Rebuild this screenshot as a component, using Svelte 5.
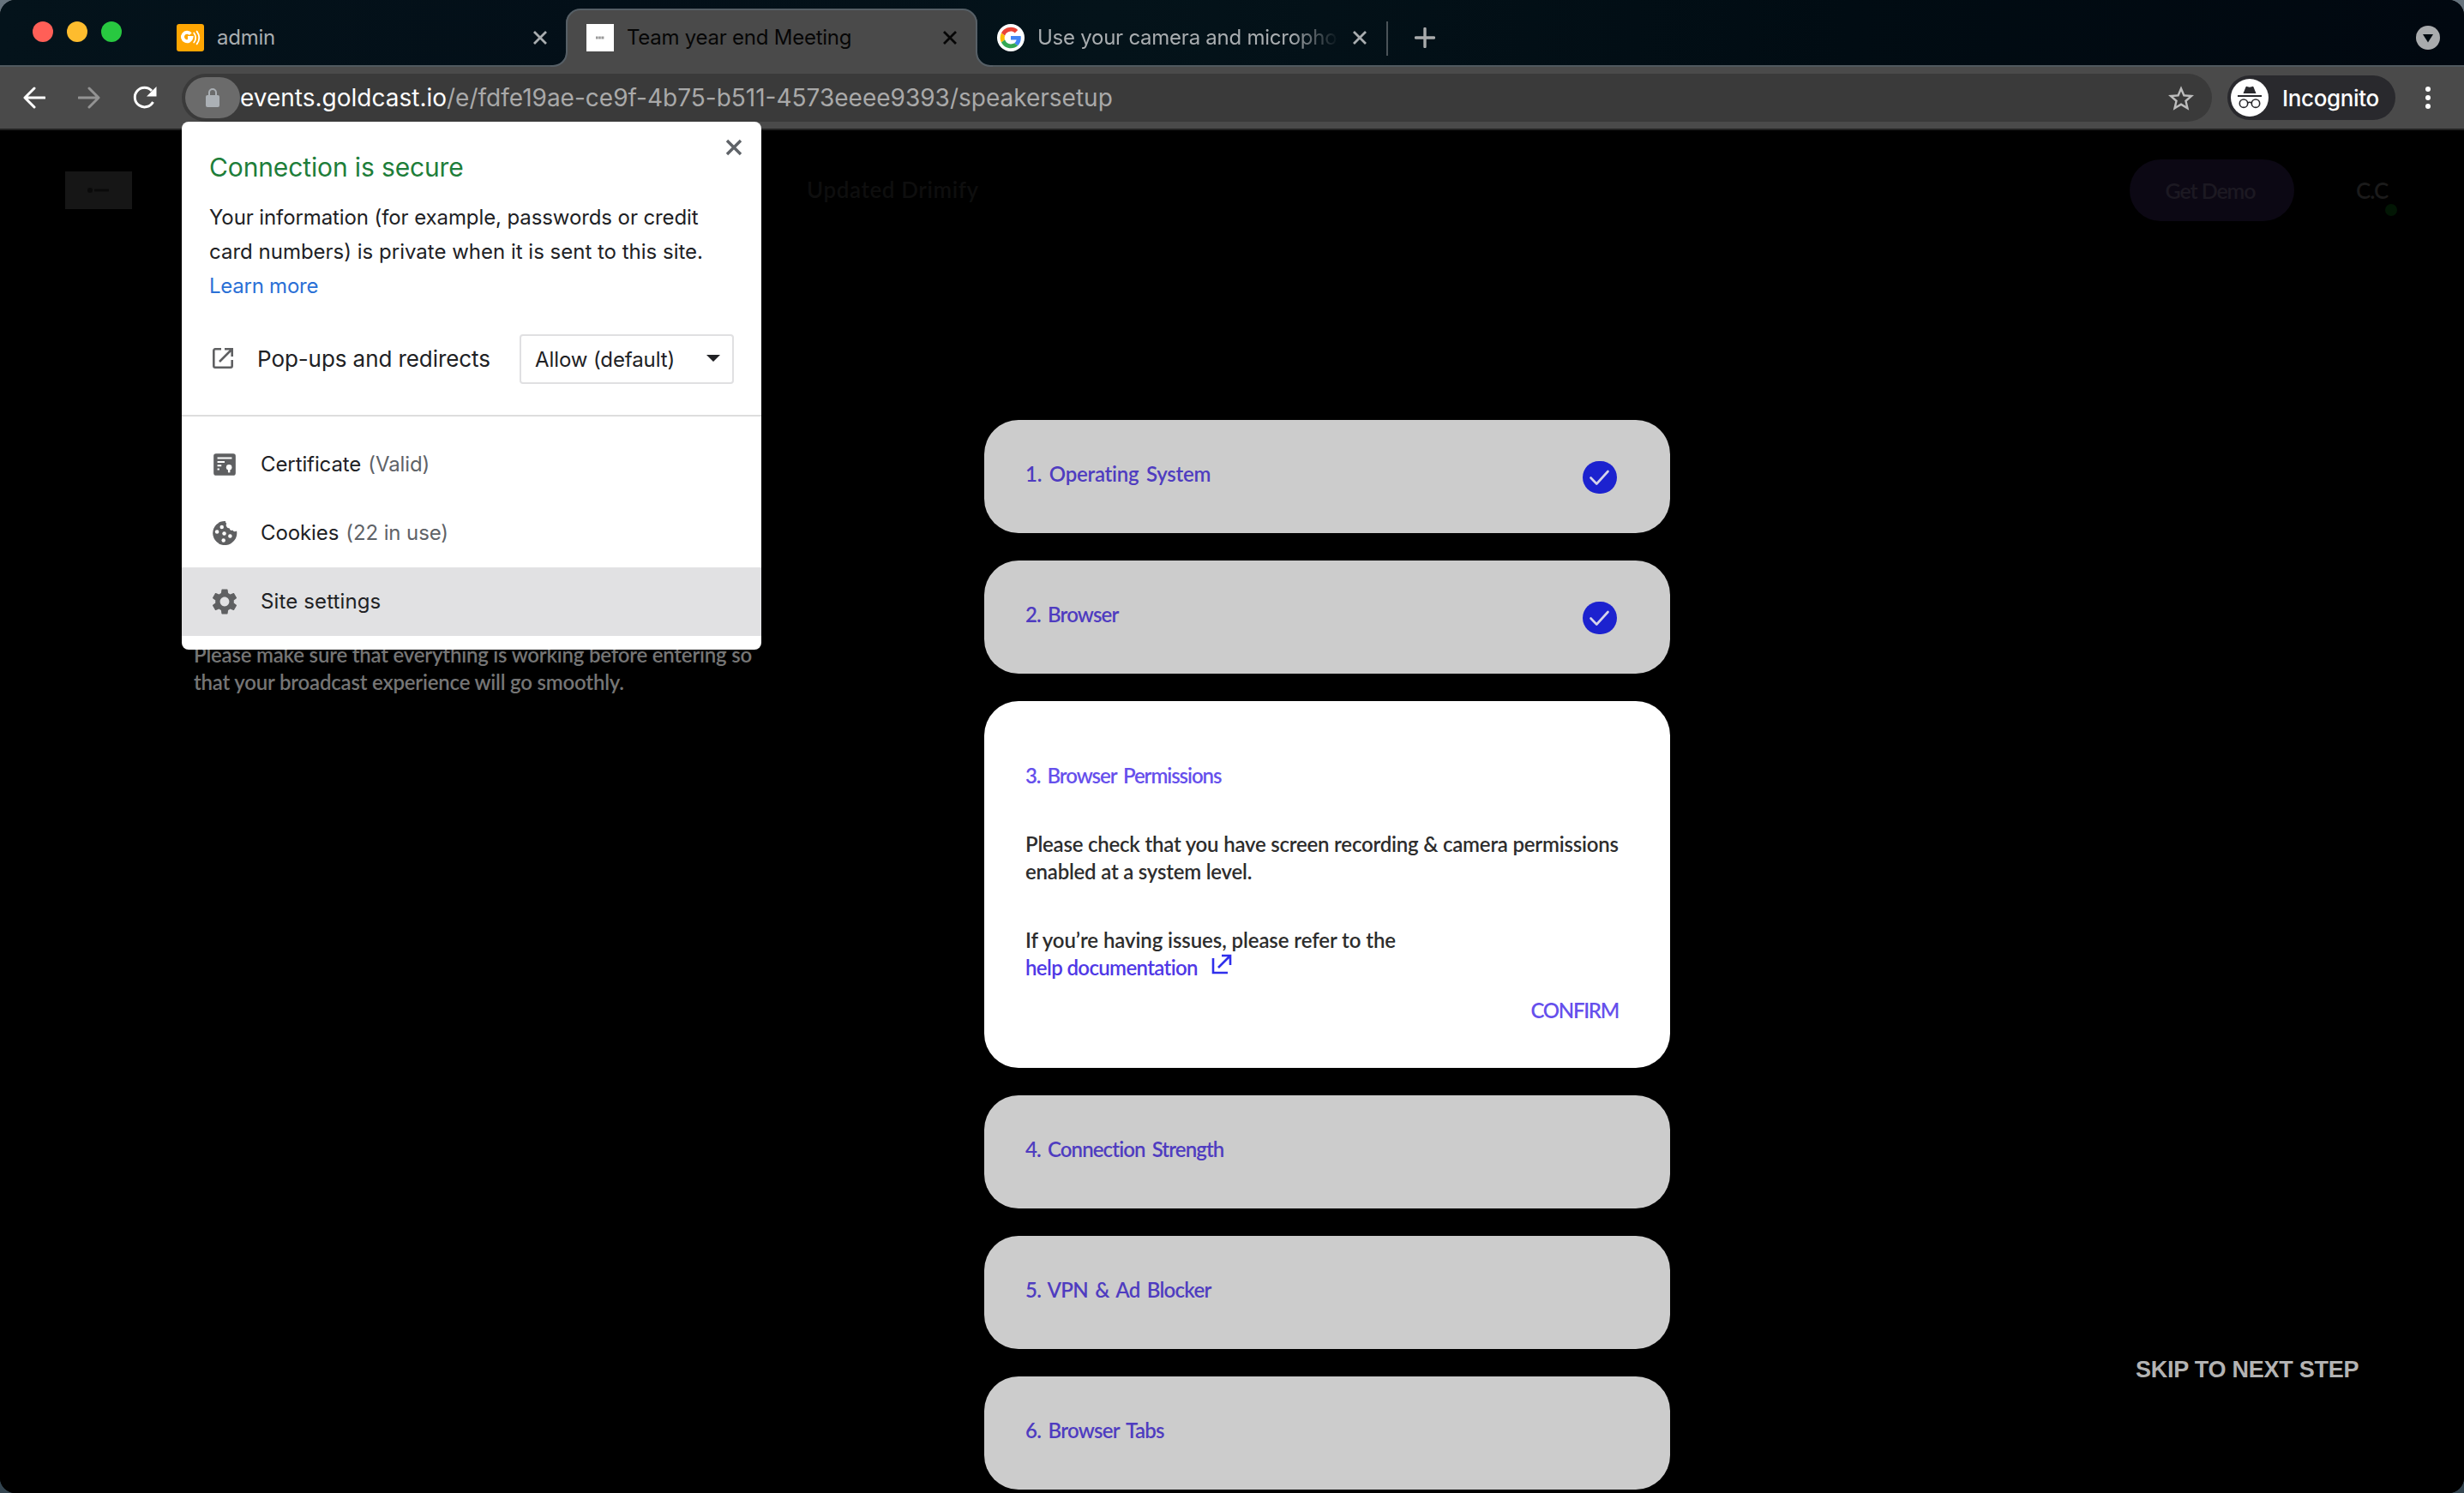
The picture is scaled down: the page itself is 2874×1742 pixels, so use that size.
<script>
    const url = {
        host: 'events.goldcast.io',
        path: '/e/fdfe19ae-ce9f-4b75-b511-4573eeee9393/speakersetup'
    };

    const steps = [
        { title: '1. Operating System', done: true, tracking: -0.25 },
        { title: '2. Browser', done: true, tracking: -0.85 },
        { title: '3. Browser Permissions', open: true, tracking: -1.05 },
        { title: '4. Connection Strength', tracking: -0.88 },
        { title: '5. VPN & Ad Blocker', tracking: -0.72 },
        { title: '6. Browser Tabs', tracking: -0.7 }
    ];

    let popupOpen = true;
    let permission = 'Allow (default)';

    function closePopup() {
        popupOpen = false;
    }
</script>

<div class="window">
    <div class="tabstrip">
        <div class="lights">
            <span class="light red"></span>
            <span class="light yellow"></span>
            <span class="light green"></span>
        </div>

        <div class="tab first">
            <svg class="favicon" viewBox="0 0 32 32">
                <rect width="32" height="32" rx="3" fill="#ffa602" />
                <path d="M16.2 11.7A5.2 5.2 0 1 0 17.3 16H13" fill="none" stroke="#fff" stroke-width="4" />
                <path d="M20.2 10.4q4 5.6 0 11.2M23.6 8.6q5.4 7.4 0 14.8" fill="none" stroke="#fff" stroke-width="1.8" stroke-linecap="round" />
            </svg>
            <span class="tab-title">admin</span>
            <svg class="tab-close" viewBox="0 0 18 18"><path d="M2 2l14 14M16 2L2 16" /></svg>
        </div>

        <div class="tab active">
            <svg class="tab-shape" viewBox="0 0 516 68">
                <path d="M0 68V67h2a16 16 0 0 0 16-16V17a16 16 0 0 1 16-16H482a16 16 0 0 1 16 16V51a16 16 0 0 0 16 16h2v1z" fill="#4a4a4a" />
                <path d="M0 67h3a16 16 0 0 0 16-16V17a16 16 0 0 1 16-16H481a16 16 0 0 1 16 16V51a16 16 0 0 0 16 16h3" fill="none" stroke="#565f66" stroke-width="2" />
            </svg>
            <svg class="favicon" viewBox="0 0 32 32">
                <rect width="32" height="32" fill="#fff" />
                <path d="M11 16h10" stroke="#999" stroke-width="3" stroke-dasharray="2.6 .6" />
            </svg>
            <span class="tab-title">Team year end Meeting</span>
            <svg class="tab-close" viewBox="0 0 18 18"><path d="M2 2l14 14M16 2L2 16" /></svg>
        </div>

        <div class="tab last">
            <svg class="favicon" viewBox="0 0 48 48">
                <circle cx="24" cy="24" r="24" fill="#fff" />
                <g transform="translate(5.5 5.5) scale(.77)">
                    <path fill="#EA4335" d="M24 9.5c3.54 0 6.71 1.22 9.21 3.6l6.85-6.85C35.9 2.38 30.47 0 24 0 14.62 0 6.51 5.38 2.56 13.22l7.98 6.19C12.43 13.72 17.74 9.5 24 9.5z" />
                    <path fill="#4285F4" d="M46.98 24.55c0-1.57-.15-3.09-.38-4.55H24v9.02h12.94c-.58 2.96-2.26 5.48-4.78 7.18l7.73 6c4.51-4.18 7.09-10.36 7.09-17.65z" />
                    <path fill="#FBBC05" d="M10.53 28.59c-.48-1.45-.76-2.99-.76-4.59s.27-3.14.76-4.59l-7.98-6.19C.92 16.46 0 20.12 0 24c0 3.88.92 7.54 2.56 10.78l7.97-6.19z" />
                    <path fill="#34A853" d="M24 48c6.48 0 11.93-2.13 15.89-5.81l-7.73-6c-2.15 1.45-4.92 2.3-8.16 2.3-6.26 0-11.57-4.22-13.47-9.91l-7.98 6.19C6.51 42.62 14.62 48 24 48z" />
                </g>
            </svg>
            <span class="tab-title fade">Use your camera and micropho</span>
            <svg class="tab-close" viewBox="0 0 18 18"><path d="M2 2l14 14M16 2L2 16" /></svg>
        </div>

        <span class="separator"></span>
        <svg class="new-tab" viewBox="0 0 24 24"><path d="M12 1.500v21M1.500 12h21" /></svg>
        <svg class="tab-search" viewBox="0 0 28 28">
            <circle cx="14" cy="14" r="14" fill="#a9abad" />
            <path d="M8 10h12l-6 9.500z" fill="#000a10" />
        </svg>
    </div>

    <div class="toolbar">
        <svg class="nav" viewBox="0 0 26 26"><path d="M25 13H2.500M13 2L2 13l11 11" stroke="#fff" /></svg>
        <svg class="nav" viewBox="0 0 26 26"><path d="M1 13h22.500M13 2l11 11-11 11" stroke="#939393" /></svg>
        <svg class="reload" viewBox="0 0 28 28">
            <path d="M23.500 19A11.300 11.300 0 1 1 22 6" fill="none" stroke="#fff" stroke-width="3" />
            <path d="M27.500 1v11.500H16z" fill="#fff" />
        </svg>

        <div class="omnibox">
            <button class="lock" aria-label="View site information">
                <svg viewBox="0 0 16 22">
                    <path d="M4 9V5a4 4 0 0 1 8 0v4" fill="none" stroke="#abb0b5" stroke-width="2" />
                    <rect y="8" width="16" height="14" rx="2" fill="#abb0b5" />
                </svg>
            </button>
            <span class="url">{url.host}<span class="path">{url.path}</span></span>
            <svg class="star" viewBox="2 2 20 19"><path fill="#bdbdbd" d="M22 9.24l-7.190-.62L12 2 9.190 8.630 2 9.240l5.460 4.730L5.820 21 12 17.270 18.180 21l-1.630-7.030L22 9.240zM12 15.400l-3.760 2.270 1-4.280-3.320-2.880 4.380-.38L12 6.100l1.710 4.040 4.380.38-3.320 2.880 1 4.280L12 15.400z" /></svg>
        </div>

        <div class="incognito">
            <svg viewBox="0 0 44 44">
                <circle cx="22" cy="22" r="22" fill="#fff" />
                <path d="M14.500 17l3-7.500q.4-1 1.400-.5l3.100.7 3.100-.7q1-.5 1.400.5l3 7.500z" fill="#29292d" />
                <path d="M8 20h28" stroke="#29292d" stroke-width="2" />
                <g fill="none" stroke="#29292d" stroke-width="1.600">
                    <circle cx="15" cy="28.700" r="4.700" />
                    <circle cx="29" cy="28.700" r="4.700" />
                    <path d="M19.700 28q2.300-1.500 4.600 0" />
                </g>
            </svg>
            <span>Incognito</span>
        </div>
        <svg class="dots" viewBox="0 0 6 26">
            <circle cx="3" cy="3" r="3" /><circle cx="3" cy="13" r="3" /><circle cx="3" cy="23" r="3" />
        </svg>
    </div>

    <div class="page">
        <header>
            <svg class="logo" viewBox="0 0 78 44">
                <rect width="78" height="44" fill="#161616" />
                <circle cx="29" cy="22" r="3" fill="#0a0a0a" />
                <path d="M34 22h17" stroke="#0a0a0a" stroke-width="3" />
            </svg>
            <span class="event-name">Updated Drimify</span>
            <button class="demo">Get Demo</button>
            <div class="avatar">C.C<span class="status"></span></div>
        </header>

        <main>
            <p class="intro">
                Please make sure that everything is working before entering so<br />
                <span>that your broadcast experience will go smoothly.</span>
            </p>

            <div class="steps">
                {#each steps as step}
                    <section class="card" class:open={step.open}>
                        <div class="card-head">
                            <h2 style="letter-spacing: {step.tracking}px">{step.title}</h2>
                            {#if step.done}
                                <svg class="check" viewBox="0 0 40 38">
                                    <rect width="40" height="38" rx="19" fill="#1c22cf" />
                                    <path d="M9.500 19.500l6.800 7L29.500 12" fill="none" stroke="#d6d4ea" stroke-width="2.600" stroke-linecap="round" stroke-linejoin="round" />
                                </svg>
                            {/if}
                        </div>
                        {#if step.open}
                            <p class="check-text">
                                Please check that you have screen recording &amp; camera permissions<br />
                                enabled at a system level.
                            </p>
                            <p class="issues">If you’re having issues, please refer to the</p>
                            <p class="help">
                                <span>help documentation</span>
                                <svg viewBox="0 0 24 24"><path d="M2 5v17h17M8 16L22 2M12 2h10v11" /></svg>
                            </p>
                            <button class="confirm">CONFIRM</button>
                        {/if}
                    </section>
                {/each}
            </div>

            <button class="skip">SKIP TO NEXT STEP</button>
        </main>
    </div>

    {#if popupOpen}
        <div class="popup">
            <div class="popup-main">
                <button class="popup-close" aria-label="Close" on:click={closePopup}>
                    <svg viewBox="0 0 20 20"><path d="M2 2l16 16M18 2L2 18" /></svg>
                </button>
                <h1>Connection is secure</h1>
                <p>
                    Your information (for example, passwords or credit<br />
                    <span class="wide">card numbers) is private when it is sent to this site.</span><br />
                    <span class="link">Learn more</span>
                </p>
                <div class="permission">
                    <svg class="popout" viewBox="0 0 24 24">
                        <path d="M10 1.300H3a1.700 1.700 0 0 0-1.700 1.700v18A1.700 1.700 0 0 0 3 22.700h18a1.700 1.700 0 0 0 1.700-1.700v-7M14 1.300h8.700V10M22 2L8 16" />
                    </svg>
                    <span class="permission-name">Pop-ups and redirects</span>
                    <div class="select">
                        {permission}
                        <svg viewBox="0 0 16 8"><path d="M0 0h16L8 8z" fill="#202124" /></svg>
                    </div>
                </div>
            </div>

            <div class="menu">
                <div class="menu-item">
                    <svg viewBox="0 0 32 32">
                        <rect x="2.300" y="2.300" width="27.400" height="27.400" rx="3" fill="#5f6062" />
                        <path d="M7 8h18M7 12.800h9M7 17.300h5M7 21.800h2.500" stroke="#fff" stroke-width="2.200" />
                        <circle cx="21.500" cy="19.500" r="3.500" fill="#fff" />
                        <path d="M20.200 21h2.600v5h-2.600z" fill="#fff" />
                    </svg>
                    <span>Certificate</span><span class="detail">(Valid)</span>
                </div>
                <div class="menu-item">
                    <svg viewBox="0 0 32 32">
                        <path d="M17 1a15 15 0 1 0 14 12.200q-1 .8-2.500.8-1.800 0-2.700-1.700-.8.600-2 .3-1.700-.6-1.600-2.600-3.200.2-4.200-2.800-.5-1.700.4-3.200Q16.800 3 17 1z" fill="#5f6062" />
                        <g fill="#fff">
                            <circle cx="12.500" cy="8.500" r="2.400" />
                            <circle cx="6.500" cy="14.500" r="2.400" />
                            <circle cx="15.500" cy="16.500" r="2.400" />
                            <circle cx="22.800" cy="19.800" r="2.400" />
                            <circle cx="14.600" cy="25" r="2.400" />
                        </g>
                    </svg>
                    <span>Cookies</span><span class="detail">(22 in use)</span>
                </div>
                <div class="menu-item hover">
                    <svg viewBox="2 2 20 20"><path fill="#5f6062" d="M19.140 12.940c.04-.3.06-.61.06-.94 0-.32-.02-.64-.07-.94l2.030-1.580c.18-.14.23-.41.12-.61l-1.920-3.320c-.12-.22-.37-.29-.59-.22l-2.390.96c-.5-.38-1.030-.7-1.620-.94L14.400 2.810c-.04-.24-.24-.41-.48-.41h-3.840c-.24 0-.43.17-.47.41L9.250 5.350C8.660 5.590 8.120 5.920 7.630 6.290L5.240 5.330c-.22-.08-.47 0-.59.22L2.740 8.870C2.620 9.080 2.660 9.340 2.860 9.480l2.030 1.580C4.840 11.360 4.800 11.690 4.800 12s.02.64.07.94l-2.030 1.580c-.18.14-.23.41-.12.61l1.920 3.320c.12.22.37.29.59.22l2.390-.96c.5.38 1.030.7 1.620.94l.36 2.540c.05.24.24.41.48.41h3.840c.24 0 .44-.17.47-.41l.36-2.540c.59-.24 1.130-.56 1.620-.94l2.390.96c.22.08.47 0 .59-.22l1.920-3.320c.12-.22.07-.47-.12-.61L19.140 12.940zM12 15.600c-1.980 0-3.600-1.620-3.600-3.600s1.620-3.600 3.600-3.600 3.600 1.620 3.600 3.600S13.980 15.600 12 15.600z" /></svg>
                    <span class="wide">Site settings</span>
                </div>
            </div>
        </div>
    {/if}
</div>

<style>
    :global(body) {
        background: linear-gradient(#66737d, #33444f);
    }
    h1, h2, p {
        margin: 0;
        font-weight: inherit;
    }
    button {
        border: none;
        padding: 0;
        background: none;
        font: inherit;
        cursor: pointer;
    }
    svg {
        display: block;
        flex: none;
    }
    .window {
        position: relative;
        box-sizing: border-box;
        width: 2874px;
        height: 1742px;
        overflow: hidden;
        border-radius: 18px;
        background: #000;
        font-family: Inter, "Liberation Sans", sans-serif;
    }

    /* tabs */
    .tabstrip {
        display: flex;
        align-items: flex-start;
        box-sizing: border-box;
        height: 78px;
        padding: 10px 28px 0 38px;
        border-bottom: 2px solid #50595f;
        background: linear-gradient(90deg, #04131b, #030f18 25%, #04131a 45%, #010c13 75%, #010810);
    }
    .lights {
        display: flex;
        gap: 16px;
        width: 168px;
        padding-top: 15px;
    }
    .light {
        width: 24px;
        height: 24px;
        border-radius: 50%;
    }
    .red {
        background: #ff5f57;
    }
    .yellow {
        background: #febc2e;
    }
    .green {
        background: #28c840;
    }
    .tab {
        position: relative;
        display: flex;
        align-items: center;
        box-sizing: border-box;
        height: 68px;
        color: #a9adb0;
        font-size: 24px;
        letter-spacing: -0.25px;
    }
    .tab.first {
        width: 454px;
        padding-right: 21px;
    }
    .tab.active {
        width: 480px;
        padding: 0 23px 0 24px;
        color: #060606;
    }
    .tab.last {
        width: 477px;
        padding: 0 22px 0 23px;
    }
    .tab-shape {
        position: absolute;
        left: -18px;
        top: 0;
        width: 516px;
        height: 68px;
    }
    .favicon {
        position: relative;
        width: 32px;
        height: 32px;
    }
    .tab-title {
        position: relative;
        flex: 1;
        min-width: 0;
        padding: 0 0 1px 15px;
        white-space: nowrap;
    }
    .fade {
        margin-right: 12px;
        -webkit-mask-image: linear-gradient(90deg, #000 84%, transparent 99%);
        mask-image: linear-gradient(90deg, #000 84%, transparent 99%);
    }
    .tab-close {
        position: relative;
        width: 18px;
        height: 18px;
        fill: none;
        stroke: currentColor;
        stroke-width: 2.8;
    }
    .separator {
        width: 2px;
        height: 40px;
        margin: 15px 32px 0 0;
        background: #4a5358;
    }
    .new-tab {
        width: 24px;
        height: 24px;
        margin: 22px auto 0 -1px;
        stroke: #a9abac;
        stroke-width: 3.4;
        stroke-linecap: round;
    }
    .tab-search {
        width: 28px;
        height: 28px;
        margin-top: 20px;
    }

    /* toolbar */
    .toolbar {
        display: flex;
        align-items: center;
        box-sizing: border-box;
        height: 74px;
        padding: 0 39px 0 27px;
        border-bottom: 2px solid #222;
        background: #4a4a4a;
    }
    .nav {
        width: 26px;
        height: 26px;
        margin-right: 38px;
        fill: none;
        stroke-width: 3;
        stroke-linecap: round;
        stroke-linejoin: round;
    }
    .reload {
        width: 28px;
        height: 28px;
    }
    .omnibox {
        display: flex;
        align-items: center;
        box-sizing: border-box;
        width: 2368px;
        height: 56px;
        margin: 0 18px 0 29px;
        padding: 0 21px 0 4px;
        border-radius: 28px;
        background: #3a3a3a;
    }
    .lock {
        display: flex;
        align-items: center;
        justify-content: center;
        width: 64px;
        height: 48px;
        border-radius: 24px;
        background: #6b6b6b;
    }
    .lock svg {
        width: 16px;
        height: 22px;
    }
    .url {
        flex: 1;
        color: #fff;
        font-size: 28px;
    }
    .path {
        color: #a9a9a9;
    }
    .star {
        width: 30px;
        height: 29px;
    }
    .incognito {
        display: flex;
        align-items: center;
        gap: 16px;
        box-sizing: border-box;
        width: 196px;
        height: 52px;
        padding-left: 4px;
        border-radius: 26px;
        background: #29292d;
        color: #fff;
        font-size: 26px;
        font-weight: 500;
        letter-spacing: -0.35px;
    }
    .incognito svg {
        width: 44px;
        height: 44px;
    }
    .dots {
        width: 6px;
        height: 26px;
        margin-left: auto;
        fill: #fff;
    }

    /* page under the toolbar */
    .page {
        height: 1590px;
        background: #000;
        font-family: Lato, "Open Sans", sans-serif;
        font-size: 24px;
        font-weight: 600;
        line-height: 32px;
    }
    header {
        display: flex;
        align-items: center;
        box-sizing: border-box;
        height: 140px;
        padding: 0 90px 0 76px;
    }
    .logo {
        width: 78px;
        height: 44px;
    }
    .event-name {
        margin: -2px 0 0 787px;
        color: #0e0e0e;
        font-size: 26px;
        letter-spacing: 0.6px;
    }
    .demo {
        width: 192px;
        height: 72px;
        margin: 0 72px 0 auto;
        padding-right: 4px;
        border-radius: 36px;
        background: #0c0814;
        color: #1c1922;
        font-size: 25px;
        letter-spacing: -1.1px;
    }
    .avatar {
        position: relative;
        width: 36px;
        color: #1b1b1b;
        font-size: 26px;
        letter-spacing: -1px;
    }
    .status {
        position: absolute;
        left: 34px;
        top: 32px;
        width: 14px;
        height: 14px;
        border-radius: 50%;
        background: #021604;
    }
    main {
        display: flex;
        align-items: flex-start;
        padding-left: 226px;
    }
    .intro {
        width: 922px;
        padding-top: 456px;
        color: #757575;
        letter-spacing: -0.2px;
        white-space: nowrap;
    }
    .steps {
        display: flex;
        flex-direction: column;
        gap: 32px;
        width: 800px;
        padding-top: 198px;
    }
    .card {
        box-sizing: border-box;
        height: 132px;
        padding: 47px 62px 0 48px;
        border-radius: 40px;
        background: #ccc;
        color: #4f3cc0;
    }
    .card.open {
        height: 428px;
        padding-top: 71px;
        background: #fff;
        color: #6650ec;
    }
    .card-head {
        display: flex;
        justify-content: space-between;
    }
    h2 {
        font-size: 24px;
        line-height: 32px;
        word-spacing: 3px;
    }
    .check {
        width: 40px;
        height: 38px;
        margin-top: 1px;
    }
    .check-text {
        padding-top: 48px;
        color: #2d2d2d;
        letter-spacing: -0.21px;
        white-space: nowrap;
    }
    .issues {
        padding-top: 48px;
        color: #2d2d2d;
        letter-spacing: -0.08px;
    }
    .help {
        display: flex;
        gap: 16px;
        color: #5038e6;
        letter-spacing: -0.63px;
    }
    .help svg {
        width: 24px;
        height: 24px;
        fill: none;
        stroke: #2f2fec;
        stroke-width: 2.6;
    }
    .confirm {
        display: block;
        margin: 18px -2px 0 auto;
        color: #6650ec;
        letter-spacing: -1.3px;
    }
    .skip {
        margin: 1290px 0 0 543px;
        color: #b3b3b3;
        font: 700 27px/32px "Liberation Sans", Arial, sans-serif;
        letter-spacing: -0.25px;
    }

    /* site information popup */
    .popup {
        position: absolute;
        left: 212px;
        top: 142px;
        width: 676px;
        height: 616px;
        overflow: hidden;
        border-radius: 8px;
        background: #fff;
        color: #202124;
        font-size: 24px;
        letter-spacing: -0.1px;
    }
    .popup-main {
        box-sizing: border-box;
        height: 344px;
        padding: 33px 32px 0;
        border-bottom: 2px solid #ddd;
    }
    .popup-close {
        position: absolute;
        right: 22px;
        top: 20px;
    }
    .popup-close svg {
        width: 20px;
        height: 20px;
        fill: none;
        stroke: #5f6368;
        stroke-width: 3.4;
    }
    h1 {
        color: #1e7e3a;
        font-size: 30px;
        font-weight: 400;
        line-height: 40px;
        letter-spacing: -0.13px;
    }
    .popup p {
        padding-top: 19px;
        line-height: 40px;
        white-space: nowrap;
    }
    .wide {
        letter-spacing: 0;
    }
    .menu .wide {
        letter-spacing: 0.13px;
    }
    .link {
        color: #2a70d6;
        letter-spacing: -0.25px;
    }
    .permission {
        display: flex;
        align-items: center;
        margin-top: 36px;
    }
    .popout {
        width: 24px;
        height: 24px;
        margin: 0 28px 2px 4px;
        fill: none;
        stroke: #5f6062;
        stroke-width: 2.6;
    }
    .permission-name {
        padding-bottom: 1px;
        font-size: 26px;
        letter-spacing: -0.08px;
    }
    .select {
        display: flex;
        align-items: center;
        justify-content: space-between;
        box-sizing: border-box;
        width: 250px;
        height: 58px;
        margin-left: auto;
        padding: 0 14px 0 16px;
        border: 2px solid #e0e0e2;
        border-radius: 4px;
        letter-spacing: -0.1px;
    }
    .select svg {
        width: 16px;
        height: 8px;
        margin-top: -3px;
    }
    .menu {
        padding-top: 16px;
    }
    .menu-item {
        display: flex;
        align-items: center;
        height: 80px;
        padding-left: 35px;
    }
    .menu-item svg {
        width: 30px;
        height: 30px;
        margin-right: 27px;
    }
    .menu-item span {
        padding-bottom: 2px;
    }
    .detail {
        margin-left: 8px;
        color: #5f6368;
    }
    .hover {
        background: #e1e1e3;
    }
</style>
